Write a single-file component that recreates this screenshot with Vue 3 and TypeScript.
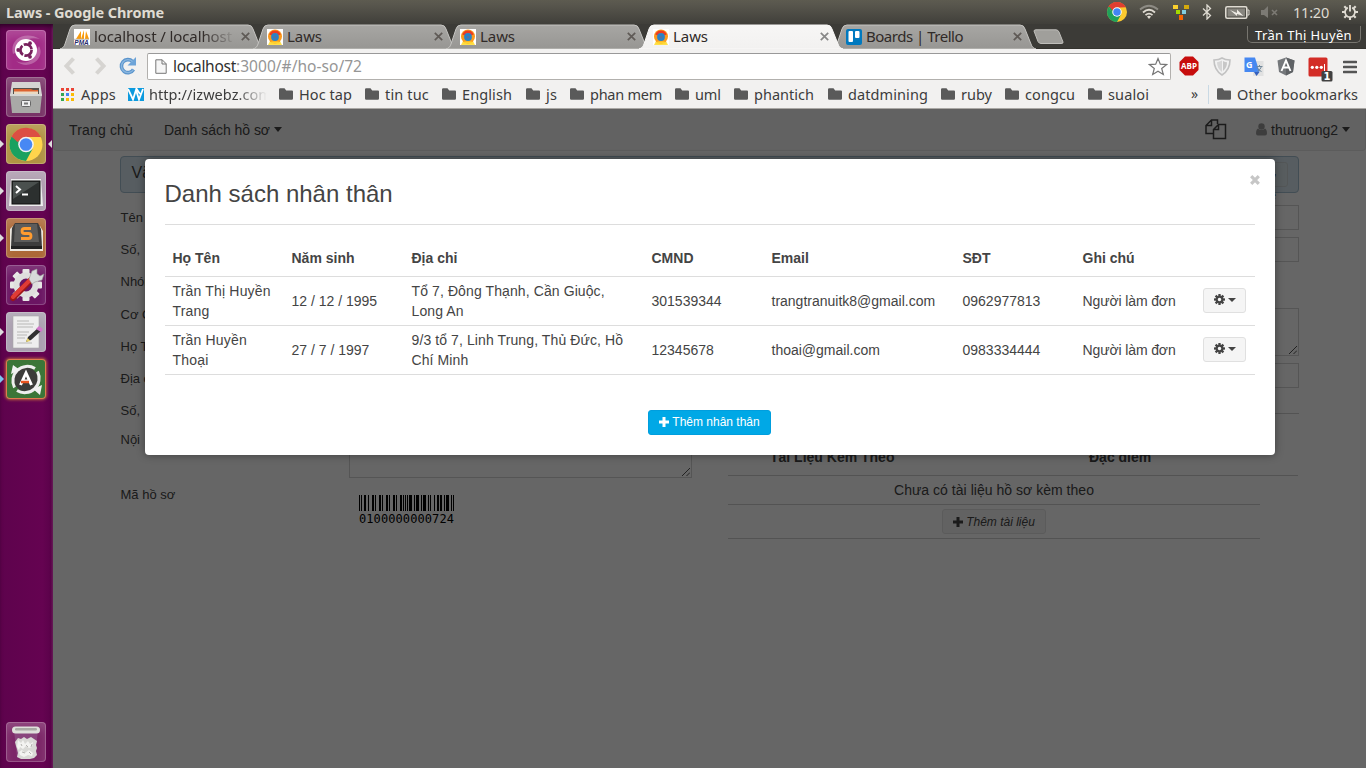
<script setup lang="ts">
interface Tab { title: string; icon: 'pma' | 'laws' | 'trello'; width: number; active?: boolean; fade?: boolean }
interface Bookmark { label: string; text: number; slot: number }
interface Relative {
  name: string; born: string; address: string; card: string
  email: string; phone: string; note: string
}

// Stretches or tightens a label so that it fills the given width.
const vFit = {
  mounted(el: HTMLElement, binding: { value: number }) {
    const range = document.createRange()
    range.selectNodeContents(el)
    const natural = range.getBoundingClientRect().width
    const count = (el.textContent ?? '').trim().length
    if (count > 0) el.style.letterSpacing = `${(binding.value - natural) / count}px`
  },
}

const tabs: Tab[] = [
  { title: 'localhost / localhost', icon: 'pma', width: 138, fade: true },
  { title: 'Laws', icon: 'laws', width: 35 },
  { title: 'Laws', icon: 'laws', width: 35 },
  { title: 'Laws', icon: 'laws', width: 35, active: true },
  { title: 'Boards | Trello', icon: 'trello', width: 97 },
]

const bookmarks: Bookmark[] = [
  { label: 'Hoc tap', text: 53, slot: 86 },
  { label: 'tin tuc', text: 44, slot: 77 },
  { label: 'English', text: 50, slot: 84 },
  { label: 'js', text: 11, slot: 44 },
  { label: 'phan mem', text: 72, slot: 105 },
  { label: 'uml', text: 26, slot: 59 },
  { label: 'phantich', text: 60, slot: 94 },
  { label: 'datdmining', text: 80, slot: 113 },
  { label: 'ruby', text: 31, slot: 64 },
  { label: 'congcu', text: 50, slot: 83 },
  { label: 'sualoi', text: 41, slot: 60 },
]

const columns = ['Họ Tên', 'Năm sinh', 'Địa chỉ', 'CMND', 'Email', 'SĐT', 'Ghi chú', '']
const relatives: Relative[] = [
  { name: 'Trần Thị Huyền Trang', born: '12 / 12 / 1995', address: 'Tổ 7, Đông Thạnh, Cần Giuộc, Long An', card: '301539344', email: 'trangtranuitk8@gmail.com', phone: '0962977813', note: 'Người làm đơn' },
  { name: 'Trần Huyền Thoại', born: '27 / 7 / 1997', address: '9/3 tổ 7, Linh Trung, Thủ Đức, Hồ Chí Minh', card: '12345678', email: 'thoai@gmail.com', phone: '0983334444', note: 'Người làm đơn' },
]

const labels = ['Tên', 'Số,', 'Nhóm', 'Cơ Cấp', 'Họ Tên', 'Địa chỉ', 'Số,', 'Nội']
const code = '0100000000724'
const patterns = ['0001101', '0011001', '0010011', '0111101', '0100011', '0110001', '0101111', '0111011', '0110111', '0001011']
const invert = (s: string) => [...s].map((c) => (c === '1' ? '0' : '1')).join('')
const digits = [...code.slice(1)].map(Number)
const modules =
  '101' + digits.slice(0, 6).map((d) => patterns[d]).join('') +
  '01010' + digits.slice(6).map((d) => invert(patterns[d])).join('') + '101'
const bars = [...modules].map((c, i) => (c === '1' ? `M${i} 0h1v16h-1z` : '')).join('')

const apps = ['dash', 'files', 'chrome', 'terminal', 'sublime', 'settings', 'editor', 'updater'] as const
const dots = ['#ea4335', '#ea4335', '#ea4335', '#34a853', '#4285f4', '#fbbc05', '#34a853', '#fbbc05', '#fbbc05']
const teeth = [0, 45, 90, 135, 180, 225, 270, 315]
</script>

<template>
  <div class="desktop">
    <header class="panel">
      <span class="title"><span v-fit="158">Laws - Google Chrome</span></span>
      <div class="tray">
        <svg class="t-chrome" width="20" height="20" viewBox="0 0 40 40">
          <circle cx="20" cy="20" r="20" fill="#fbc92f" />
          <path d="M20 20L2.7 10A20 20 0 0 1 37.3 10L20 11z" fill="#e03e30" />
          <path d="M2.7 10A20 20 0 0 0 20 40L28 25L20 20L12 24z" fill="#1fa15b" />
          <path d="M2.7 10L12 25L20 20V10z" fill="#1fa15b" /><path d="M4 8.5A20 20 0 0 1 37.3 10.5H20L11 17z" fill="#e03e30" />
          <circle cx="20" cy="20" r="9.5" fill="#fff" /><circle cx="20" cy="20" r="7.5" fill="#4285f4" />
        </svg>
        <svg class="t-wifi" width="20" height="16" viewBox="0 0 20 16" fill="none" stroke-width="1.8">
          <path d="M1 5.5Q10-2 19 5.5" stroke="#8d8b84" /><path d="M4 8.5Q10 3 16 8.5M6.5 11.2Q10 8 13.5 11.2" stroke="#dfdbd2" />
          <path d="M8 12.5Q10 11 12 12.5L10 15z" fill="#dfdbd2" />
        </svg>
        <svg class="t-blocks" width="17" height="15" viewBox="0 0 17 15">
          <path fill="#fbd02d" d="M0 0h5v4H0z" /><path fill="#d4a90c" d="M11 0h5v4h-5z" /><path fill="#a5d800" d="M3 5h4v4H3z" /><path fill="#83cde0" d="M9 5h4v4H9z" /><path fill="#fa6400" d="M6 10h4v5H6z" />
        </svg>
        <svg class="t-bt" width="10" height="16" viewBox="0 0 10 16" fill="none" stroke="#dfdbd2" stroke-width="1.3"><path d="M1 4.5L8.5 11.5L5 15V1L8.5 4.5L1 11.5" /></svg>
        <svg class="t-bat" width="25" height="13" viewBox="0 0 25 13"><rect x=".8" y=".8" width="21" height="11.4" rx="1.5" fill="none" stroke="#dfdbd2" stroke-width="1.6" /><path d="M22.5 4H24v5h-1.5" fill="none" stroke="#dfdbd2" /><path d="M2.5 2.5H20v8H2.5z" fill="#87857e" /><path d="M5 4l7 3v-3.5L18.5 10l-6.5-2v2z" fill="#eeebe4" /></svg>
        <svg class="t-mute" width="18" height="13" viewBox="0 0 18 13"><path d="M0 4h3l4-4v12L3 9H0z" fill="#7c7a74" /><path d="M11 4l5 5m0-5l-5 5" stroke="#7c7a74" stroke-width="1.6" /></svg>
        <span class="clock"><span v-fit="36">11:20</span></span>
        <svg class="t-gear" width="16" height="16" viewBox="0 0 16 16" fill="none" stroke="#dfdbd2"><path d="M5.800 3.600A5 5 0 1 0 10.200 3.600" stroke-width="1.800" /><path d="M8 1v6.500" stroke-width="1.900" /><path d="M0 8h3M13 8h3M8 13v3M2.300 2.300l2 2M13.700 2.300l-2 2M2.300 13.700l2-2M13.700 13.700l-2-2" stroke-width="2.100" /></svg>
      </div>
    </header>

    <div class="main">
      <aside class="launcher">
        <div v-for="app in apps" :key="app" class="tile" :class="app">
          <svg v-if="app === 'dash'" viewBox="0 0 40 40" width="40" height="40">
            <path d="M7 24C3 9 19 0 34 9C24 6 12 11 12 21zM33 16C40 28 23 42 10 31C19 35 29 31 29 23z" fill="#fff" opacity=".25" />
            <circle cx="20" cy="20" r="11" fill="#fff" /><circle cx="20" cy="20" r="5.6" fill="none" stroke="#77215d" stroke-width="2.7" stroke-dasharray="10.2 1.5" /><g fill="#77215d"><circle cx="12.2" cy="20" r="1.9" /><circle cx="24" cy="13.2" r="1.9" /><circle cx="24" cy="26.8" r="1.9" /></g>
          </svg>
          <svg v-else-if="app === 'files'" viewBox="0 0 40 40" width="40" height="40">
            <path d="M6 5h28l2 13H4z" fill="#d5d5d2" /><path d="M7 11h26v7H7z" fill="#56504b" /><path d="M8 12h17l2 1h5v5H8z" fill="#dd6330" /><path d="M8 14.500h24v3H8z" fill="#ead9c1" /><path d="M4 17h32l-2 19H6z" fill="#a9a9a7" /><path d="M4 17h32v2H4z" fill="#d6d6d4" /><rect x="15.500" y="23.500" width="9" height="6" rx="1" fill="#eee" stroke="#666" /><path d="M18 25.500h4v2h-4z" fill="#777" />
          </svg>
          <svg v-else-if="app === 'chrome'" viewBox="0 0 40 40" width="40" height="40">
            <circle cx="20" cy="20.5" r="16.5" fill="#ffd44c" /><path d="M5.5 12.5A16.5 16.5 0 0 0 20 37l6.5-12L20 20.5z" fill="#1aa160" /><path d="M5.5 12.5A16.5 16.5 0 0 1 35 13H20l-8.5 5z" fill="#dc4f43" /><circle cx="20" cy="20.5" r="7.8" fill="#f2f2f2" /><circle cx="20" cy="20.5" r="6.3" fill="#4788f4" />
          </svg>
          <svg v-else-if="app === 'terminal'" viewBox="0 0 40 40" width="40" height="40">
            <path d="M5 8h30l2 27H3z" fill="#eee" /><rect x="6" y="10" width="28" height="23" fill="#2c302f" stroke="#0e0e0e" /><path d="M7 11h26L7 28z" fill="#4a504e" /><path d="M10 15l4 3.5L10 22M16 23.5h6" fill="none" stroke="#fff" stroke-width="2" />
          </svg>
          <svg v-else-if="app === 'sublime'" viewBox="0 0 40 40" width="40" height="40">
            <path d="M4 11l3-3h27l3 5v20H4z" fill="#ece7df" /><path d="M6 10l3-5h23l3 6 1 18H5z" fill="#3d3d3d" /><path d="M9 6h22l2 18H8z" fill="#5c5c5b" /><path d="M25 10.500H18.500Q16 10.500 16 13T18.500 15.500H22.500Q25 15.500 25 18T22.500 20.500H15" fill="none" stroke="#ff9c2f" stroke-width="2.800" /><path d="M5 28h31v3H5z" fill="#222" />
          </svg>
          <svg v-else-if="app === 'settings'" viewBox="0 0 40 40" width="40" height="40">
            <g fill="#e7e7e5"><rect v-for="a in teeth" :key="a" x="16.5" y="4" width="7" height="8" rx="1" :transform="`rotate(${a} 20 20)`" /></g><circle cx="20" cy="20" r="9.5" fill="none" stroke="#dfdfdd" stroke-width="6" /><path d="M7 33L26 14" stroke="#9e1616" stroke-width="6" stroke-linecap="round" /><path d="M7 32L26 13" stroke="#e03b35" stroke-width="4" stroke-linecap="round" /><path d="M23 14l3-8 5-2v5l3 2 4-2-2 6-7 2-3 2z" fill="#d7dad9" stroke="#999" stroke-width=".6" />
          </svg>
          <svg v-else-if="app === 'editor'" viewBox="0 0 40 40" width="40" height="40">
            <path d="M7 4h26v32H7z" fill="#eee" stroke="#aaa" stroke-width=".6" /><path d="M11 9h12m-12 3h17m-17 3h16m-16 5h12m-12 3h10m-10 3h8m-8 5h15" stroke="#b7b7b5" stroke-width="1.2" /><path d="M20 30l2-5 10-9 3 3-10 9z" fill="#303030" /><path d="M20 30l1.5-4 3 3z" fill="#e9d36b" /><path d="M30 17l3-3 4 3-2 3z" fill="#d178ca" />
          </svg>
          <svg v-else viewBox="0 0 40 40" width="40" height="40">
            <circle cx="20" cy="20.5" r="12" fill="#3c3c3a" /><path d="M8.500 28.500A14.500 14.500 0 0 1 29 9.500M31.500 12.500A14.500 14.500 0 0 1 11 31.500" fill="none" stroke="#eee" stroke-width="3" /><path d="M5 15l2-9 7 5zM27 30l9-4-2 10z" fill="#f2f2f2" /><path d="M14.500 26L20 14L25.500 26M16 22h8" fill="none" stroke="#fff" stroke-width="3" /><path d="M15 23h8" stroke="#e95420" stroke-width="2.500" />
          </svg>
          <i v-if="app !== 'dash' && app !== 'files' && app !== 'settings'" class="running"></i>
          <i v-if="app === 'chrome'" class="focused"></i>
        </div>
        <div class="tile trash">
          <svg viewBox="0 0 40 40" width="40" height="40">
            <path d="M8 8h24l-3 27H11z" fill="#8f5386" opacity=".7" />
            <path d="M9 20l3-4 3 1 3-2 3 2 4-2 3 2 3 2-1 4 1 3-1 3 1 4-3 3-4 1h-9l-4-2 1-4-1-4-1-3z" fill="#d9d9d6" />
            <path d="M12 18l3 3 2-3 2 4 3-3 2 3 3-2-1 5-3 1-3-2-3 3-3-2-1 3-2-3zM13 30l3-2 3 3 4-3 4 3-1 3-4-1-4 2-4-2z" fill="#f3f3f1" />
            <path d="M15 22l1 2m4-1l2 2m4-3l-1 3m-9 5l3 1m4-1l2 2" stroke="#b4b3b0" fill="none" />
            <rect x="6" y="4.500" width="28" height="7" rx="3.500" fill="#dfe0db" /><rect x="9" y="6" width="22" height="2.500" rx="1.200" fill="#a9aaa5" />
          </svg>
        </div>
      </aside>

      <section class="browser">
        <div class="tabstrip">
          <div v-for="(tab, i) in tabs" :key="i" class="tab" :class="{ active: tab.active }">
            <svg class="shape" width="206" height="25" viewBox="0 0 206 25">
              <defs><linearGradient :id="`tab${i}`" x2="0" y2="1"><stop offset="0" :stop-color="tab.active ? '#f7f6f5' : '#a7a6a3'" /><stop offset="1" :stop-color="tab.active ? '#f2f1f0' : '#979693'" /></linearGradient></defs>
              <path d="M0 25C3 24 4 23 5 20L10 5Q11 1 15 1H188Q192 1 193 5L199 20C200 23 201 24 204 25z" :fill="`url(#tab${i})`" :stroke="tab.active ? '#faf9f8' : '#c5c4c1'" stroke-width="1" />
            </svg>
            <svg v-if="tab.icon === 'pma'" class="fav" width="16" height="16" viewBox="0 0 16 16"><path fill="#fff" d="M0 0h16v16H0z" /><path d="M2 10L7 2v8zM7 10L10 1v9zM11 10l1-8 3 8z" fill="#f89c0e" /><path d="M0 10.3h15" stroke="#bbb" /><text x=".3" y="15.8" class="pma">PMA</text></svg>
            <svg v-else-if="tab.icon === 'laws'" class="fav" width="16" height="16" viewBox="0 0 16 16"><path fill="#fff" d="M0 0h16v16H0z" /><path d="M3.500 11h9l2.500 5H1z" fill="#ffe04a" /><circle cx="8" cy="7.500" r="7" fill="#fb9a1c" /><path d="M3.500 6a4.800 4.800 0 0 1 9 0" stroke="#ee3c20" stroke-width="2.600" fill="none" /><circle cx="8" cy="8" r="3.900" fill="#2a82c6" /><circle cx="8" cy="8.200" r="1.300" fill="#5d6f9c" /><path d="M4.500 12.500h7l1.500 2h-10z" fill="#ffd22e" /></svg>
            <svg v-else class="fav" width="16" height="16" viewBox="0 0 16 16"><rect width="16" height="16" rx="2" fill="#0079bf" /><rect x="2.5" y="2" width="4.5" height="11" rx="1" fill="#fff" /><rect x="9" y="2" width="4.5" height="7" rx="1" fill="#fff" /></svg>
            <span class="tab-title" :class="{ fade: tab.fade }"><span v-fit="tab.width">{{ tab.title }}</span></span>
            <svg class="close" width="9" height="9" viewBox="0 0 9 9"><path d="M.8.8l7.4 7.4m0-7.4L.8 8.2" stroke-width="1.7" /></svg>
          </div>
          <svg class="newtab" width="32" height="16" viewBox="0 0 32 16"><path d="M1 2Q1 .8 3 .8H23Q25 .8 26 3L30 13Q30.500 14.500 28 14.500H8Q6 14.500 5 12.500z" fill="#a09f9b" stroke="#c0bfbb" /></svg>
          <span class="user"><span v-fit="97">Trần Thị Huyền</span></span>
        </div>

        <div class="toolbar">
          <svg class="nav" width="62" height="24" viewBox="0 0 62 24" fill="none" stroke="#d6d4d1" stroke-width="4"><path d="M17.500 4.500L10.500 12L17.500 19.500M40.500 4.500L47.500 12L40.500 19.500" /></svg>
          <svg class="reload" width="20" height="20" viewBox="0 0 20 20"><path d="M15.500 13.500A6.500 6.500 0 1 1 14.500 5.500" fill="none" stroke="#5a94cc" stroke-width="3.600" /><path d="M18 1V9.500H9.500z" fill="#6da4d8" /><path d="M15.500 13.500A6.500 6.500 0 1 1 14.500 5.500" fill="none" stroke="#8ab6df" stroke-width="1.400" /></svg>
          <div class="omnibox">
            <svg width="12" height="15" viewBox="0 0 12 15"><path d="M.8.8h6.400l4 4v9.500H.8z" fill="#f6f6f6" stroke="#777" /><path d="M7 .8v4.200h4.200" fill="none" stroke="#777" /></svg>
            <span class="url"><span v-fit="63" class="host">localhost</span><span v-fit="126">:3000/#/ho-so/72</span></span>
            <svg class="star" width="20" height="19" viewBox="0 0 20 19"><path d="M10 1.500l2.300 5.700 6.200.4-4.800 3.900 1.600 6L10 14.200l-5.300 3.300 1.600-6L1.500 7.600l6.200-.4z" fill="#fff" stroke="#767676" stroke-width="1.200" /></svg>
          </div>
          <div class="exts">
            <svg width="20" height="20" viewBox="0 0 20 20"><path d="M6 .5h8L19.500 6v8L14 19.500H6L.5 14V6z" fill="#c70d0d" /><text x="10" y="13.300" class="abp" textLength="16" lengthAdjust="spacingAndGlyphs">ABP</text></svg>
            <svg width="18" height="19" viewBox="0 0 18 19"><path d="M1 3Q6 3 9 1Q12 3 17 3Q17 13 9 18Q1 13 1 3z" fill="#f1f1f1" stroke="#c2c2c2" stroke-width="1.600" /><path d="M4 5.200Q7 5 9 3.600V15Q4 11 4 5.200z" fill="#d6d6d6" /><path d="M10 4q2 1.200 4 1.200Q14 11 10 14z" fill="#c7c7c7" /></svg>
            <svg width="20" height="20" viewBox="0 0 20 20"><path d="M9 4h10.500v15H9z" fill="#e1e1e1" /><path d="M.5.500H11L15.500 15H.500z" fill="#4688f1" /><path d="M10 15h5.500L12.500 19z" fill="#3460bd" /><text x="2" y="11" class="gt">G</text><path d="M12.500 9.500h6m-3-1.500v1.500m2 0q-1 3-4 5m-.5-4q1.500 3 4.500 4" fill="none" stroke="#71889a" /></svg>
            <svg width="18" height="19" viewBox="0 0 18 19"><path d="M9 .5L17.500 3.500L16 15L9 18.500L2 15L.5 3.500z" fill="#75787b" /><path d="M9 .5L17.500 3.500L16 15L9 18.500z" fill="#5f6265" /><path d="M4.500 14L9 3.500L13.500 14M6.200 10.500h5.600" fill="none" stroke="#fff" stroke-width="1.900" /></svg>
            <svg width="25" height="25" viewBox="0 0 25 25"><rect x=".5" y=".5" width="19" height="19" rx="1.500" fill="#d32d27" /><g fill="#fff"><circle cx="4.300" cy="10.300" r="1.600" /><circle cx="8.800" cy="10.300" r="1.600" /><circle cx="13.300" cy="10.300" r="1.600" /><path d="M16 7h1v7h-1z" /></g><rect x="13.500" y="14" width="11" height="10.500" rx="1.500" fill="#414141" /><text x="19" y="23" class="badge">1</text></svg>
            <svg width="14" height="14" viewBox="0 0 14 14"><path d="M1 2h12M1 7h12M1 12h12" stroke="#555" stroke-width="2.700" stroke-linecap="round" /></svg>
          </div>
        </div>

        <div class="bookmarks">
          <svg class="apps" width="13" height="13" viewBox="0 0 13 13"><rect v-for="(c, i) in dots" :key="i" :x="(i % 3) * 5" :y="Math.floor(i / 3) * 5" width="3" height="3" :fill="c" /></svg>
          <span class="apps-label"><span v-fit="35">Apps</span></span>
          <svg class="izw" width="16" height="13" viewBox="0 0 16 13"><path fill="#0c9ade" d="M0 0h16v13H0z" /><path d="M0 1l5 10.500L8 2l3 9.500L15 1M8 0l4 6" stroke="#fff" stroke-width="1.800" fill="none" /></svg>
          <span class="izw-label"><span v-fit="123">http://izwebz.com</span></span>
          <div v-for="b in bookmarks" :key="b.label" class="bookmark" :style="{ width: b.slot + 'px' }">
            <svg width="14" height="12" viewBox="0 0 14 12"><path d="M0 1.500Q0 .3 1.200.3H5.500L7.200 2.500H13Q14 2.500 14 3.500V10.500Q14 11.700 12.800 11.700H1.200Q0 11.700 0 10.500z" fill="#5a5a5a" /></svg>
            <span v-fit="b.text">{{ b.label }}</span>
          </div>
          <span class="more">»</span>
          <div class="bookmark other">
            <svg width="14" height="12" viewBox="0 0 14 12"><path d="M0 1.500Q0 .3 1.200.3H5.500L7.200 2.500H13Q14 2.500 14 3.500V10.500Q14 11.700 12.800 11.700H1.200Q0 11.700 0 10.500z" fill="#5a5a5a" /></svg>
            <span v-fit="121">Other bookmarks</span>
          </div>
        </div>

        <div class="viewport">
          <nav class="navbar">
            <a v-fit="64">Trang chủ</a>
            <a class="menu"><span v-fit="106">Danh sách hồ sơ</span><i class="caret"></i></a>
            <svg class="copy" width="22" height="21" viewBox="0 0 22 21" fill="none" stroke="#444" stroke-width="1.500"><path d="M8 14.500H1V6.500L6.500 1H12.500V5M6.500 1V6.500H1M13.500 5.500H20.500V19.500H8.500V10.500zM13.500 5.500V10.500H8.500" /></svg>
            <a class="account"><svg width="11" height="13" viewBox="0 0 11 13"><circle cx="5.500" cy="3.500" r="3.200" fill="#999" /><path d="M2 5.500Q0 6.500 0 10.500Q0 12.500 2 12.500H9Q11 12.500 11 10.500Q11 6.500 9 5.500Q5.500 8.500 2 5.500z" fill="#999" /></svg><span>thutruong2</span><i class="caret"></i></a>
          </nav>
          <div class="heading"><span>Văn bản</span><button type="button">Trở về</button></div>
          <div class="form">
            <div class="left">
              <div class="labels"><label v-for="(l, i) in labels" :key="i">{{ l }}</label></div>
              <div class="field"><div class="area"><svg class="grip" width="8" height="8" viewBox="0 0 8 8"><path d="M0 8L8 0M4.500 8L8 4.500" stroke="#555" /></svg></div></div>
              <label class="code-label">Mã hồ sơ</label>
              <div class="barcode"><svg width="95" height="16" viewBox="0 0 95 16" shape-rendering="crispEdges"><path :d="bars" fill="#000" /></svg><span v-fit="95">{{ code }}</span></div>
            </div>
            <div class="right">
              <div class="input"></div><div class="input"></div>
              <div class="area"><svg class="grip" width="8" height="8" viewBox="0 0 8 8"><path d="M0 8L8 0M4.500 8L8 4.500" stroke="#555" /></svg></div>
              <div class="input"></div>
              <div class="rule"></div>
              <div class="docs-head"><b>Tài Liệu Kèm Theo</b><b>Đặc điểm</b></div>
              <div class="docs-row"><span v-fit="200">Chưa có tài liệu hồ sơ kèm theo</span></div>
              <div class="docs-row last"><button type="button"><svg width="10" height="10" viewBox="0 0 10 10"><path d="M3.500 0h3v3.500H10v3H6.500V10h-3V6.500H0v-3h3.500z" fill="#444" /></svg><i>Thêm tài liệu</i></button></div>
            </div>
          </div>
          <div class="backdrop">
            <div class="modal">
              <svg class="dismiss" width="10" height="10" viewBox="0 0 10 10"><path d="M1.200 1.200l7.600 7.600m0-7.600L1.200 8.800" stroke="#c6c6c6" stroke-width="3.200" /></svg>
              <h3>Danh sách nhân thân</h3>
              <table>
                <colgroup><col class="c119"><col class="c120"><col class="c240"><col class="c120"><col class="c191"><col class="c120"><col class="c120"><col class="c60"></colgroup>
                <thead><tr><th v-for="(c, i) in columns" :key="i">{{ c }}</th></tr></thead>
                <tbody>
                  <tr v-for="r in relatives" :key="r.card">
                    <td class="name">{{ r.name }}</td><td>{{ r.born }}</td><td class="address">{{ r.address }}</td><td>{{ r.card }}</td><td>{{ r.email }}</td><td>{{ r.phone }}</td><td class="note">{{ r.note }}</td>
                    <td class="actions"><button type="button" class="gear"><svg width="11" height="11" viewBox="0 0 22 22"><g fill="#444"><rect v-for="a in teeth" :key="a" x="8.700" y="0" width="4.600" height="6" :transform="`rotate(${a} 11 11)`" /></g><circle cx="11" cy="11" r="5.700" fill="none" stroke="#444" stroke-width="4.400" /></svg><i class="caret small"></i></button></td>
                  </tr>
                </tbody>
              </table>
              <button type="button" class="add"><svg width="10" height="10" viewBox="0 0 10 10"><path d="M3.500 0h3v3.500H10v3H6.500V10h-3V6.500H0v-3h3.500z" fill="#fff" /></svg><span>Thêm nhân thân</span></button>
            </div>
          </div>
        </div>
      </section>
    </div>
  </div>
</template>

<style>
html, body { margin: 0; overflow: hidden; }
</style>

<style scoped>
* { box-sizing: border-box; }
.desktop { width: 1366px; height: 768px; overflow: hidden; display: flex; flex-direction: column; font-family: "Noto Sans", "Open Sans", sans-serif; font-size: 14.5px; color: #3c3c3c; }
svg { display: block; flex: none; }
button { font-family: inherit; margin: 0; }
.panel { height: 24px; flex: none; display: flex; align-items: center; justify-content: space-between; background: linear-gradient(#5d5b50, #58564d 20%, #403f3a); color: #dfdbd2; padding-left: 6px; padding-right: 8px; }
.title { font-weight: 700; font-size: 14.5px; white-space: nowrap; line-height: 23px; }
.tray { display: flex; align-items: center; }
.t-wifi { margin-left: 12px; }
.t-blocks { margin-left: 14px; margin-top: 1px; }
.t-bt { margin-left: 12px; }
.t-bat { margin-left: 13px; }
.t-mute { margin-left: 11px; }
.clock { width: 36px; margin-left: 14px; margin-right: 13px; font-size: 14.5px; white-space: nowrap; line-height: 22px; margin-top: -1px; }
.main { flex: 1; display: flex; min-height: 0; }
.launcher { width: 53px; flex: none; display: flex; flex-direction: column; gap: 7px; padding: 6px 0 6px 6px; background: linear-gradient(90deg, #5e034d, #650351 80%, #5b024a 96%, #752466); box-shadow: inset 0 4px 5px -2px #2a0023; }
.tile { position: relative; width: 40px; height: 40px; border-radius: 4px; display: flex; justify-content: center; background: #74266a; box-shadow: inset 0 0 0 1px rgba(255, 255, 255, .2), inset 0 7px 9px rgba(255, 255, 255, .15); }
.dash { background: #a22b86; }
.files { background: #783467; }
.chrome { background: #b09343; }
.terminal { background: #ae9cae; }
.sublime { background: #ac6837; }
.settings { background: #6b1563; }
.editor { background: #aaa0b0; }
.updater { background: #3b7638; box-shadow: inset 0 0 0 1px #e17b50, 0 0 3px 1px #b8603f; }
.trash { background: #7c2768; margin-top: auto; }
.running { position: absolute; left: -6px; top: 16px; border-left: 4px solid #ddd; border-top: 4px solid transparent; border-bottom: 4px solid transparent; }
.updater .running { border-left-color: #7cc5ef; }
.focused { position: absolute; right: -6px; top: 16px; border-right: 4px solid #ddd; border-top: 4px solid transparent; border-bottom: 4px solid transparent; }
.browser { flex: 1; min-width: 0; display: flex; flex-direction: column; }
.tabstrip { height: 25px; flex: none; background: #3c3b37; display: flex; padding-left: 8px; border-bottom: 1px solid #35342f; position: relative; }
.tab { position: relative; width: 193px; flex: none; display: flex; align-items: center; padding: 2px 0 0 13px; color: #302a28; }
.tab.active { z-index: 1; }
.shape { position: absolute; left: -1px; top: 0; z-index: 0; }
.fav { position: relative; z-index: 1; }
.tab-title { position: relative; z-index: 1; margin-left: 4px; width: 142px; white-space: nowrap; overflow: hidden; line-height: 20px; margin-top: -2px; font-size: 15px; }
.fade { mask-image: linear-gradient(90deg, #000 76%, transparent); }
.close { position: relative; z-index: 1; margin-left: 5px; margin-top: -1px; stroke: #5f5a56; }
.active .close { stroke: #888; }
.pma { font: italic 700 6.500px "Liberation Sans", sans-serif; fill: #29296b; }
.newtab { margin: 5px 0 0 7px; }
.user { margin-left: auto; margin-right: 5px; margin-top: 2px; height: 17px; width: 114px; padding-left: 7px; color: #fff; font-size: 13px; line-height: 18px; border: 1px solid #77756f; border-top: 0; border-radius: 0 0 5px 5px; white-space: nowrap; }
.toolbar { height: 34px; flex: none; background: #f2f1f0; display: flex; align-items: center; }
.nav { margin-left: 3px; }
.omnibox { margin-left: 9px; width: 1024px; height: 27px; flex: none; background: #fff; border: 1px solid #b2b0ad; border-top-color: #999; border-radius: 2px; display: flex; align-items: center; padding: 0 2px 0 7px; font-size: 15.500px; }
.url { margin-left: 6px; color: #969696; white-space: nowrap; line-height: 24px; }
.host { color: #303030; }
.star { margin-left: auto; }
.exts { display: flex; align-items: center; margin-left: 8px; }
.exts svg:nth-child(2) { margin-left: 14px; }
.exts svg:nth-child(3) { margin-left: 13px; margin-top: 1px; }
.exts svg:nth-child(4) { margin-left: 13px; margin-top: 1px; }
.exts svg:nth-child(5) { margin-left: 13px; margin-top: 6px; }
.exts svg:nth-child(6) { margin-left: 10px; margin-top: 1px; }
.abp { font: 700 9px "Open Sans", sans-serif; fill: #fff; text-anchor: middle; }
.gt { font: 700 9px "Open Sans", sans-serif; fill: #fff; }
.badge { font: 700 10px "DejaVu Sans", sans-serif; fill: #fff; text-anchor: middle; }
.bookmarks { height: 26px; flex: none; background: #f2f1f0; border-bottom: 1px solid #aaa8a5; display: flex; align-items: center; padding: 0 0 3px 8px; white-space: nowrap; line-height: 20px; }
.bookmarks span { margin-top: -1px; }
.apps-label { margin-left: 7px; width: 35px; }
.izw { margin-left: 12px; }
.izw-label { margin-left: 5px; width: 124px; margin-right: 6px; mask-image: linear-gradient(90deg, #000 70%, transparent 95%); }
.bookmark { display: flex; align-items: center; gap: 6px; flex: none; }
.more { width: 20px; margin-left: 43px; font-size: 14px; }
.other { padding-left: 8px; margin-left: -3px; border-left: 1px solid #c9d9e4; }
.viewport { flex: 1; position: relative; background: #fff; font-family: "Liberation Sans", Arial, sans-serif; font-size: 14px; line-height: 20px; overflow: hidden; color: #444; }
.navbar { height: 42px; background: #f5f5f5; border: 1px solid #e5e5e5; border-top: 0; border-radius: 0 0 4px 4px; display: flex; align-items: center; padding: 0 15px; white-space: nowrap; }
.menu { margin-left: 31px; display: flex; align-items: center; }
.menu .caret { margin-left: 4px; }
.caret { display: inline-block; border-top: 5px solid #444; border-left: 4.500px solid transparent; border-right: 4.500px solid transparent; vertical-align: middle; margin-bottom: 1px; }
.caret.small { border-top-width: 4px; border-left-width: 4px; border-right-width: 4px; }
.copy { margin-left: auto; }
.account { display: flex; align-items: center; margin-left: 29px; }
.account span { margin: 0 4px; }
.heading { margin: 5px 67px 0; height: 37px; display: flex; justify-content: space-between; align-items: center; padding: 0 10px 3px 10.500px; background: #d9e9f2; border: 1px solid #a5c0d2; border-radius: 4px; font-size: 16px; }
.heading button { height: 25px; width: 62px; margin-top: 3px; padding: 5px 11px 0; text-align: right; background: #dde8ed; border: 1px solid #cfd6da; border-radius: 3px; font-size: 14px; line-height: 18px; color: #444; }
.form { display: flex; margin: 12px 67px 0; }
.left { width: 572px; margin-right: 36px; display: grid; grid-template-columns: 229px 343px; grid-template-rows: 273px auto; font-size: 13px; flex: none; }
.labels { display: flex; flex-direction: column; padding-left: .5px; }
.labels label { height: 32.200px; line-height: 25px; }
.labels label:nth-child(7) { height: 29px; }
.field { display: flex; align-items: flex-end; }
.area { position: relative; width: 100%; height: 56px; border: 1px solid #d5d5d5; }
.grip { position: absolute; right: 1px; bottom: 1px; }
.code-label { padding: 7px 0 0 .5px; }
.barcode { padding: 17px 0 0 10px; font: 12px/16px "DejaVu Sans Mono", monospace; color: #000; }
.right { flex: 1; display: flex; flex-direction: column; }
.input { height: 25px; border: 1px solid #d5d5d5; margin-bottom: 7px; flex: none; }
.right .area { margin-top: 39px; height: 48px; margin-bottom: 7px; flex: none; width: auto; }
.rule { height: 19px; border-bottom: 1px solid #d0d0d0; }
.docs-head { height: 62px; display: grid; grid-template-columns: 361px 1fr; padding-top: 33px; border-bottom: 1px solid #d0d0d0; margin-right: 1px; }
.docs-head b:first-child { padding-left: 42px; white-space: nowrap; }
.docs-row { width: 532px; height: 29px; padding-top: 4px; text-align: center; border-bottom: 1px solid #d0d0d0; }
.docs-row.last { height: 34px; display: flex; justify-content: center; }
.docs-row button { width: 104px; height: 25px; display: flex; align-items: center; justify-content: center; gap: 3px; padding: 0; font-size: 12px; color: #444; background: #f5f5f5; border: 1px solid #e3e3e3; border-radius: 3px; }
.backdrop { position: absolute; inset: 0; background: rgba(0, 0, 0, .6); padding: 50px 0 0 92px; }
.modal { position: relative; width: 1130px; height: 296px; background: #fff; border-radius: 4px; padding: 0 20px; box-shadow: 0 0 8px rgba(0, 0, 0, .4); color: #444; display: flex; flex-direction: column; }
.dismiss { position: absolute; right: 15px; top: 16px; }
h3 { margin: 0; height: 66px; flex: none; border-bottom: 1px solid #ddd; font-size: 24px; font-weight: 400; line-height: 30px; padding-top: 20px; text-indent: -.5px; }
table { margin-top: 15px; border-collapse: separate; border-spacing: 0; table-layout: fixed; width: 1090px; }
th, td { text-align: left; padding: 4px 8px 4px 7.500px; border-bottom: 1px solid #ddd; vertical-align: middle; }
th { height: 37px; }
td { height: 49px; }
.name { letter-spacing: .18px; }
.address { letter-spacing: .1px; }
.note { letter-spacing: -.12px; white-space: nowrap; }
.actions { padding: 0 8px 2px; }
.c119 { width: 119px; } .c120 { width: 120px; } .c240 { width: 240px; } .c191 { width: 191px; } .c60 { width: 60px; }
.gear { width: 43px; height: 25px; display: flex; align-items: center; justify-content: center; gap: 3px; background: #f5f5f5; border: 1px solid #e0e0e0; border-radius: 3px; padding: 0 0 1px; }
.gear .caret { margin: 0; }
.add { align-self: center; margin-top: 35px; margin-right: 1px; width: 123px; height: 25px; display: flex; align-items: center; justify-content: center; gap: 3px; border: 1px solid #009ede; border-radius: 3px; background: #00a8e6; color: #fff; font-size: 12px; padding: 0 0 1px; }
</style>
